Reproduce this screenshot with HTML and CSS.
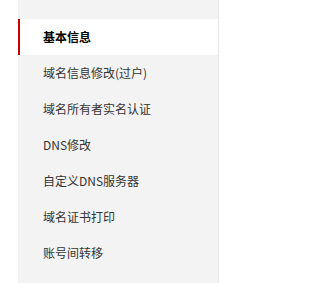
FILE: index.html
```html
<!DOCTYPE html>
<html lang="zh-CN">
<head>
<meta charset="utf-8">
<link rel="stylesheet" href="styles.css">
</head>
<body>
<nav class="side-menu">
  <a class="menu-item active">基本信息</a>
  <a class="menu-item">域名信息修改(过户)</a>
  <a class="menu-item">域名所有者实名认证</a>
  <a class="menu-item">DNS修改</a>
  <a class="menu-item">自定义DNS服务器</a>
  <a class="menu-item">域名证书打印</a>
  <a class="menu-item">账号间转移</a>
</nav>
</body>
</html>
```
FILE: styles.css
```css
html, body {
  margin: 0;
  padding: 0;
  background: #ffffff;
}
body {
  font-family: "Microsoft YaHei", "Noto Sans CJK SC", "Noto Sans", sans-serif;
  font-size: 12px;
}
.side-menu {
  margin-left: 18px;
  width: 200px;
  min-height: 283px;
  box-sizing: border-box;
  padding-top: 19px;
  background: #f3f3f3;
  border-right: 1px solid #e6e6e6;
  display: flex;
  flex-direction: column;
  width: 201px;
}
.menu-item {
  display: flex;
  align-items: center;
  height: 36px;
  padding-left: 25px;
  color: #333333;
  line-height: 1;
  text-decoration: none;
}
.menu-item.active {
  background: #ffffff;
  border-left: 2px solid #cc0000;
  padding-left: 23px;
  color: #000000;
  font-weight: bold;
}
```
